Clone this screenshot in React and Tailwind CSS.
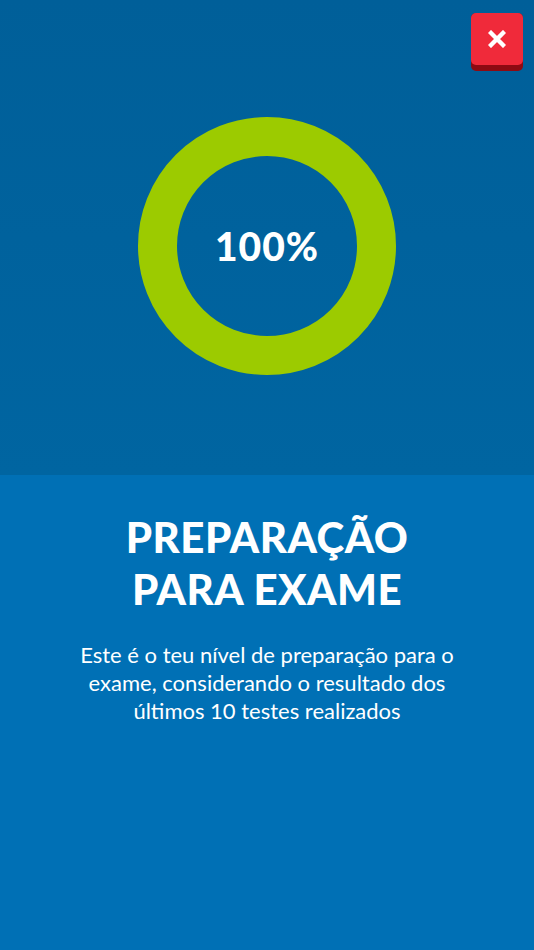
const App = () => {
  return (
    <div className="w-[534px] h-[950px] flex flex-col bg-[#0070b5]" style={{ fontFamily: 'Lato, "Open Sans", sans-serif' }}>
      {/* top: score ring */}
      <section className="relative h-[475px] bg-gradient-to-b from-[#005f99] to-[#0065a1] flex justify-center pt-[117px]">
        <button className="absolute top-[13px] right-[11px] w-[52px] h-[58px] rounded-[5px] bg-[#8e0a12] flex items-start">
          <span className="w-[52px] h-[52px] rounded-[5px] bg-[#f02a3a] flex items-center justify-center">
            <svg width="18" height="18" viewBox="0 0 18 18">
              <path d="M3 3 L15 15 M15 3 L3 15" stroke="white" strokeWidth="4.4" strokeLinecap="square" />
            </svg>
          </span>
        </button>
        <div className="w-[258px] h-[258px] rounded-full border-[39px] border-[#9ccb00] flex items-center justify-center">
          <span className="text-white text-[39px] font-black leading-none tracking-wide">100%</span>
        </div>
      </section>

      {/* bottom: text */}
      <section className="flex-1 flex flex-col items-center pt-[36px] px-10">
        <h1 className="text-white text-[42px] font-black leading-[52px] text-center tracking-[0.5px]">
          PREPARAÇÃO
          <br />
          PARA EXAME
        </h1>
        <p className="mt-[26px] text-white text-[22px] leading-[28px] text-center font-normal max-w-[390px]">
          Este é o teu nível de preparação para o exame, considerando o resultado dos últimos 10 testes realizados
        </p>
      </section>
    </div>
  )
}

export default App
